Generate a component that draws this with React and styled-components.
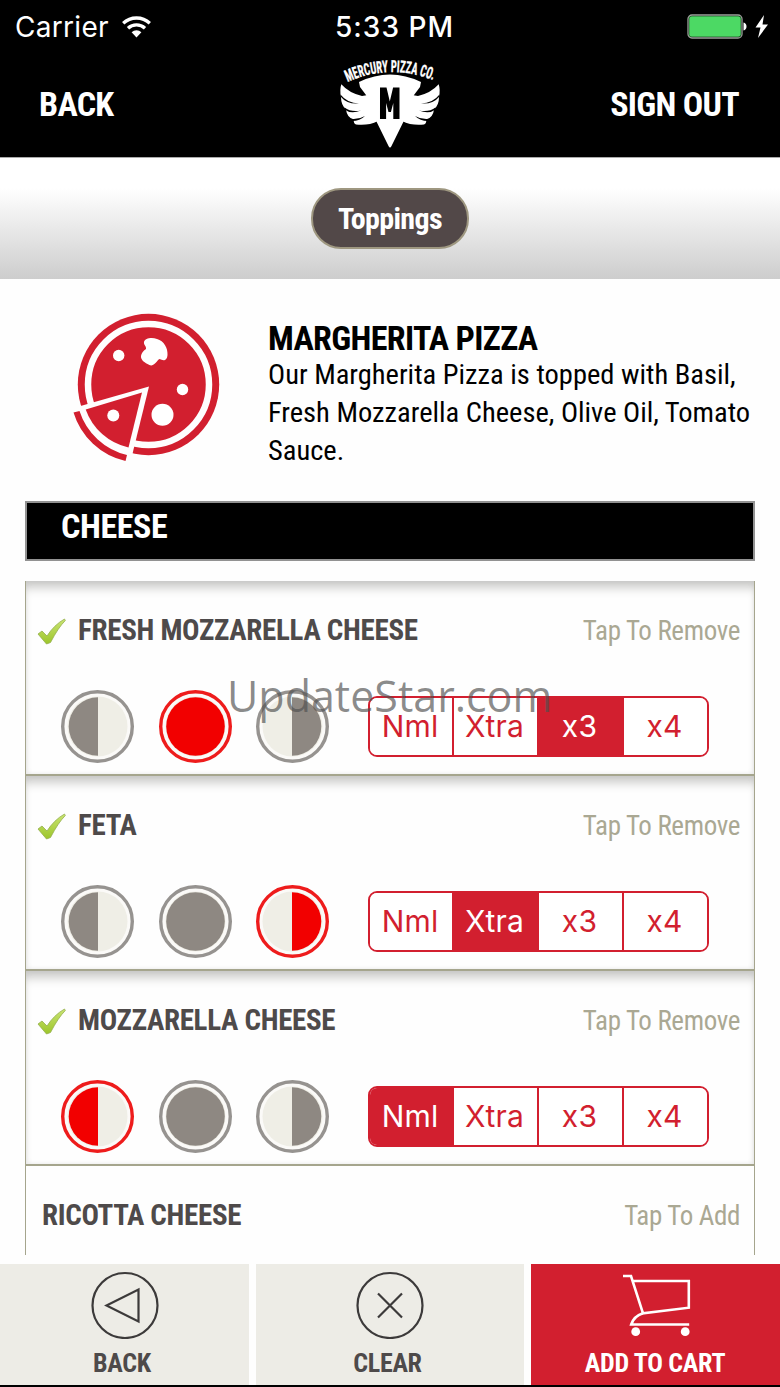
import styled, { createGlobalStyle } from "styled-components";
import { useState } from "react";

const GlobalStyle = createGlobalStyle`
  * {
    box-sizing: border-box;
  }
  body {
    margin: 0;
    background: #fff;
  }
  button {
    border: 0;
    padding: 0;
    background: none;
    font: inherit;
    color: inherit;
    cursor: pointer;
  }
  h1, h2, h3, p {
    margin: 0;
  }
`;

const Screen = styled.div`
  position: relative;
  width: 780px;
  height: 1387px;
  display: flex;
  flex-direction: column;
  overflow: hidden;
  background: #fefefe;
  font-family: "Roboto Condensed", Roboto, sans-serif;
  font-stretch: 75%;
  white-space: nowrap;
`;

const StatusBar = styled.div`
  height: 54px;
  flex: none;
  display: grid;
  grid-template-columns: 1fr auto 1fr;
  align-items: center;
  padding: 0 11px 0 15px;
  background: #000;
  color: #fff;
  font-family: Inter, sans-serif;
  font-stretch: 100%;
  font-size: 28px;
`;

const StatusGroup = styled.div`
  display: flex;
  align-items: center;
  justify-content: ${({ $end }) => ($end ? "flex-end" : "flex-start")};
  gap: 12px;
  letter-spacing: 0.3px;
`;

const Clock = styled.span`
  padding-left: 5px;
  font-weight: 500;
  letter-spacing: 1px;
`;

const NavBar = styled.header`
  height: 103px;
  flex: none;
  display: flex;
  justify-content: space-between;
  padding: 0 41px 0 39px;
  background: #000;
  color: #fff;
`;

const NavButton = styled.button`
  width: ${({ $align }) => ($align === "left" ? 141 : 139)}px;
  padding-bottom: 3px;
  text-align: ${({ $align }) => $align};
  font-size: 34px;
  font-weight: 700;
  letter-spacing: -0.7px;
`;

const TabBand = styled.div`
  height: 122px;
  flex: none;
  display: flex;
  align-items: center;
  justify-content: center;
  border-top: 1px solid #aaa;
  background: linear-gradient(#fff 25%, #cdcdcd);
`;

const Pill = styled.div`
  width: 158px;
  height: 61px;
  border-radius: 30px;
  border: 2px solid #9e9780;
  background: #524848;
  color: #fff;
  font-size: 30px;
  font-weight: 700;
  letter-spacing: -0.65px;
  line-height: 57px;
  text-align: center;
`;

const Product = styled.section`
  height: 222px;
  flex: none;
  display: flex;
  padding: 31px 25px 0 70px;
  gap: 43px;
`;

const ProductInfo = styled.div`
  padding-top: 10px;
  color: #000;
  h1 {
    font-size: 34px;
    font-weight: 700;
    letter-spacing: -0.65px;
    line-height: 36px;
  }
  p {
    font-size: 28.5px;
    line-height: 38px;
  }
`;

const SectionTitle = styled.h2`
  height: 60px;
  flex: none;
  margin: 0 25px 20px;
  padding-left: 34px;
  border: 2px solid #929292;
  background: #000;
  color: #fff;
  font-size: 34px;
  letter-spacing: -0.4px;
  line-height: 47px;
`;

const List = styled.div`
  height: 674px;
  flex: none;
  margin: 0 25px 9px;
  border: solid #a5a58d;
  border-width: 0 1px;
  overflow: hidden;
`;

const Item = styled.div`
  height: 195px;
  border-bottom: 2px solid #a5a58d;
  box-shadow: ${({ $open }) =>
    $open ? "inset 0 11px 11px -5px #c4c4c2, inset 0 0 5px #e8e8e8" : "none"};
`;

const ItemHead = styled.div`
  height: 100px;
  display: flex;
  align-items: center;
  padding: 0 14px 0 ${({ $open }) => ($open ? 11 : 16)}px;
  h3 {
    color: #4e4a4a;
    font-size: 29px;
    font-weight: 700;
    letter-spacing: -0.3px;
    padding-bottom: 2px;
    margin-left: ${({ $open }) => ($open ? 12 : 0)}px;
  }
  span {
    margin-left: auto;
    color: #aaa893;
    font-size: 27px;
    letter-spacing: -0.35px;
  }
`;

const ItemOptions = styled.div`
  display: flex;
  align-items: center;
  padding: 9px 0 0 35px;
`;

const Portions = styled.div`
  display: flex;
  gap: 24.5px;
  margin-right: 39px;
  button {
    width: 73px;
    height: 73px;
  }
  svg {
    display: block;
  }
`;

const Segments = styled.div`
  width: 341px;
  height: 61px;
  display: grid;
  grid-template-columns: 82px 85px 85px 85px;
  border: 2px solid #d21f2f;
  border-radius: 9px;
  overflow: hidden;
`;

const Segment = styled.button`
  padding: 0 2px 1px 0;
  font-family: Inter, sans-serif;
  font-stretch: 100%;
  font-size: 30px;
  letter-spacing: 0.2px;
  color: ${({ $active }) => ($active ? "#fff" : "#d21f2f")};
  background: ${({ $active }) => ($active ? "#d21f2f" : "#fff")};
  & + & {
    border-left: 2px solid #d21f2f;
  }
`;

const Footer = styled.footer`
  height: 123px;
  flex: none;
  display: grid;
  grid-template-columns: 249px 268px 249px;
  gap: 7px;
  border-bottom: 2px solid #000;
`;

const FooterButton = styled.button`
  display: flex;
  flex-direction: column;
  align-items: center;
  padding-top: 7px;
  background: ${({ $primary }) => ($primary ? "#d21f2f" : "#edece6")};
  color: ${({ $primary }) => ($primary ? "#fff" : "#4e4a4a")};
  svg {
    margin-bottom: 8px;
  }
  span {
    padding-right: ${({ $primary }) => ($primary ? 1 : 5)}px;
    font-size: 26px;
    font-weight: 700;
    letter-spacing: -0.3px;
    line-height: 32px;
  }
`;

const Watermark = styled.div`
  position: absolute;
  left: 227px;
  top: 666px;
  font-family: "Open Sans", sans-serif;
  font-stretch: 100%;
  font-size: 43px;
  line-height: 60px;
  color: rgba(80, 80, 80, 0.66);
  pointer-events: none;
`;

const WifiIcon = () => (
  <svg width="32" height="24" viewBox="0 0 32 24" fill="none" stroke="#fff">
    <path d="M2.2 8.2a19.5 19.5 0 0 1 26.6 0" strokeWidth="3.4" />
    <path d="M7 13.2a12.6 12.6 0 0 1 17 0" strokeWidth="3.4" />
    <path d="M10.6 17.2a7.3 7.3 0 0 1 9.8 0L15.5 22.4z" fill="#fff" stroke="none" />
  </svg>
);

const BatteryIcon = () => (
  <svg width="82" height="26" viewBox="0 0 82 26">
    <rect x="1" y="1" width="54" height="23" rx="4" fill="#000" stroke="#9aa49a" strokeWidth="1.3" />
    <rect x="2.2" y="2.2" width="51.6" height="20.6" rx="2.5" fill="#4cd964" />
    <path d="M56.5 8.5c4 .5 4 7.5 0 8z" fill="#fff" />
    <path d="M77 1 68.5 13.5h5L71 24 81 10.5h-5.5z" fill="#fff" />
  </svg>
);

const Logo = () => (
  <svg width="110" height="100" viewBox="335 54 110 100">
    <defs>
      <path id="arc" d="M347.5 82Q390 63 434 80.5" />
    </defs>
    <text fill="#fff" stroke="#fff" strokeWidth="0.3" fontSize="16.5" fontWeight="700">
      <textPath href="#arc" textLength="88" lengthAdjust="spacingAndGlyphs">
        MERCURY PIZZA CO.
      </textPath>
    </text>
    <Wing />
    <Wing flip />
    <path
      d="M359 82Q390 67 421 82L420 87 414 95 404.3 120 391.5 146Q390 149 388.5 146L375.7 120 366 95 360 87z"
      fill="#fff"
    />
    <path d="M380 87.5h6.5l3.3 14 3.3-14h6.4v31.5h-6.2v-16l-2.4 9h-2.4l-2.4-9v16h-6.1z" />
  </svg>
);

const Wing = ({ flip }) => (
  <g transform={flip ? "matrix(-1 0 0 1 780 0)" : undefined}>
    <path
      d="M341.3 84.3Q349 93 362 96L368 95 378 121Q368 126 356 124.5 353 123 354 119.5 347 118 346 109.5 341 105 341 97 339.5 90 341.3 84.3z"
      fill="#fff"
    />
    <path
      d="M340.5 94.500Q347 103 359 103.500 347 104.500 340.500 96.500zM344.500 107.500Q351 112.500 361 110.500 351 114.500 344.500 109.500zM352 119Q359 119.500 365 116 360 121 352 121z"
      fill="#000"
    />
  </g>
);

const PizzaIcon = () => (
  <svg width="155" height="155" viewBox="70 310 155 155">
    <circle cx="148.5" cy="384.5" r="70.7" fill="#d21f2f" />
    <circle cx="148.5" cy="384.5" r="60.5" fill="none" stroke="#fefefe" strokeWidth="6.5" />
    <path d="M149 386.5 68 409.5 72 470h56.5z" fill="#fefefe" />
    <path d="M142 392.5 85.7 409.5A59 59 0 0 0 128.5 447.5z" fill="#d21f2f" />
    <path d="M73.5 412.5a71 71 0 0 0 52 48.5l1.500-6a66 66 0 0 1-47.500-44z" fill="#d21f2f" />
    <g fill="#fff">
      <circle cx="118.7" cy="355.5" r="5.7" />
      <circle cx="182.5" cy="389.5" r="5.7" />
      <circle cx="113.3" cy="415.5" r="6" />
      <circle cx="162.5" cy="414.8" r="11" />
      <path d="M144 342c1-4 8-5 13-3 7 2 11 9 10.5 16-.5 6-4 6-8 4-2 1-2 2-4 4-3 3-5 3-8 1-4-2-7-5-6.5-8 .5-3 2-5 5-7 .5-3-2.5-4-2-7z" />
    </g>
  </svg>
);

const CheckIcon = () => (
  <svg width="29" height="27" viewBox="37 618 29 27">
    <defs>
      <linearGradient id="leaf" x1="0" y1="0" x2="0" y2="1">
        <stop offset="0" stopColor="#c9e472" />
        <stop offset="1" stopColor="#9cc52a" />
      </linearGradient>
    </defs>
    <path
      d="M38 634l4-3 5 5q7-11 17.5-17l.8 1.5q-7 7-14.8 22l-4 1.5z"
      fill="url(#leaf)"
      stroke="#94ae4c"
      strokeWidth=".8"
    />
  </svg>
);

const Portion = ({ side, active }) => {
  const color = active ? "#f20000" : "#8e8882";
  return (
    <svg width="73" height="73" viewBox="0 0 73 73">
      <circle
        cx="36.5"
        cy="36.5"
        r="34.8"
        fill="#fbfaf8"
        stroke={active ? "#ee1c1c" : "#969390"}
        strokeWidth="3.4"
      />
      <circle cx="36.5" cy="36.5" r="30" fill="#efeee6" />
      {side === "whole" && <circle cx="36.5" cy="36.5" r="29.3" fill={color} />}
      {side === "left" && <path d="M37 7.2a29.3 29.3 0 0 0 0 58.6z" fill={color} />}
      {side === "right" && <path d="M36 7.2a29.3 29.3 0 0 1 0 58.6z" fill={color} />}
    </svg>
  );
};

const RoundIcon = ({ d }) => (
  <svg width="68" height="68" viewBox="-34 -34.5 68 68" fill="none" stroke="#3c3a3a" strokeWidth="2.2">
    <circle r="32.5" />
    <path d={d} />
  </svg>
);

const CartIcon = () => (
  <svg width="72" height="68" viewBox="619.5 1271 72 68" fill="none" stroke="#fff" strokeWidth="2.6">
    <path d="M622.5 1276h8l12 37.3L688.3 1307.7V1281H633" />
    <path d="M642.3 1313.3q-9 3-11.600 11.200h58" />
    <g fill="#fff" stroke="none">
      <circle cx="635.2" cy="1331.7" r="4.4" />
      <circle cx="684.7" cy="1331.7" r="4.4" />
    </g>
  </svg>
);

const sides = ["left", "whole", "right"];
const amounts = ["Nml", "Xtra", "x3", "x4"];

const initialToppings = [
  { name: "FRESH MOZZARELLA CHEESE", added: true, side: "whole", amount: "x3" },
  { name: "FETA", added: true, side: "right", amount: "Xtra" },
  { name: "MOZZARELLA CHEESE", added: true, side: "left", amount: "Nml" },
  { name: "RICOTTA CHEESE", added: false, side: "whole", amount: "Nml" },
];

const App = () => {
  const [toppings, setToppings] = useState(initialToppings);

  const update = (name, values) =>
    setToppings((prev) =>
      prev.map((item) => (item.name === name ? { ...item, ...values } : item))
    );

  return (
    <Screen>
      <GlobalStyle />
      <StatusBar>
        <StatusGroup>
          <span>Carrier</span>
          <WifiIcon />
        </StatusGroup>
        <Clock>5:33 PM</Clock>
        <StatusGroup $end>
          <BatteryIcon />
        </StatusGroup>
      </StatusBar>
      <NavBar>
        <NavButton $align="left">BACK</NavButton>
        <Logo />
        <NavButton $align="right">SIGN OUT</NavButton>
      </NavBar>
      <TabBand>
        <Pill>Toppings</Pill>
      </TabBand>
      <Product>
        <PizzaIcon />
        <ProductInfo>
          <h1>MARGHERITA PIZZA</h1>
          <p>
            Our Margherita Pizza is topped with Basil,
            <br />
            Fresh Mozzarella Cheese, Olive Oil, Tomato
            <br />
            Sauce.
          </p>
        </ProductInfo>
      </Product>
      <SectionTitle>CHEESE</SectionTitle>
      <List>
        {toppings.map(({ name, added, side, amount }) => (
          <Item key={name} $open={added}>
            <ItemHead $open={added} onClick={() => update(name, { added: !added })}>
              {added && <CheckIcon />}
              <h3>{name}</h3>
              <span>{added ? "Tap To Remove" : "Tap To Add"}</span>
            </ItemHead>
            {added && (
              <ItemOptions>
                <Portions>
                  {sides.map((s) => (
                    <button key={s} onClick={() => update(name, { side: s })}>
                      <Portion side={s} active={s === side} />
                    </button>
                  ))}
                </Portions>
                <Segments>
                  {amounts.map((a) => (
                    <Segment
                      key={a}
                      $active={a === amount}
                      onClick={() => update(name, { amount: a })}
                    >
                      {a}
                    </Segment>
                  ))}
                </Segments>
              </ItemOptions>
            )}
          </Item>
        ))}
      </List>
      <Footer>
        <FooterButton>
          <RoundIcon d="M-18.5 0 13.5-16v32z" />
          <span>BACK</span>
        </FooterButton>
        <FooterButton>
          <RoundIcon d="M-12-12 12 12M12-12-12 12" />
          <span>CLEAR</span>
        </FooterButton>
        <FooterButton $primary>
          <CartIcon />
          <span>ADD TO CART</span>
        </FooterButton>
      </Footer>
      <Watermark>UpdateStar.com</Watermark>
    </Screen>
  );
};

export default App;
